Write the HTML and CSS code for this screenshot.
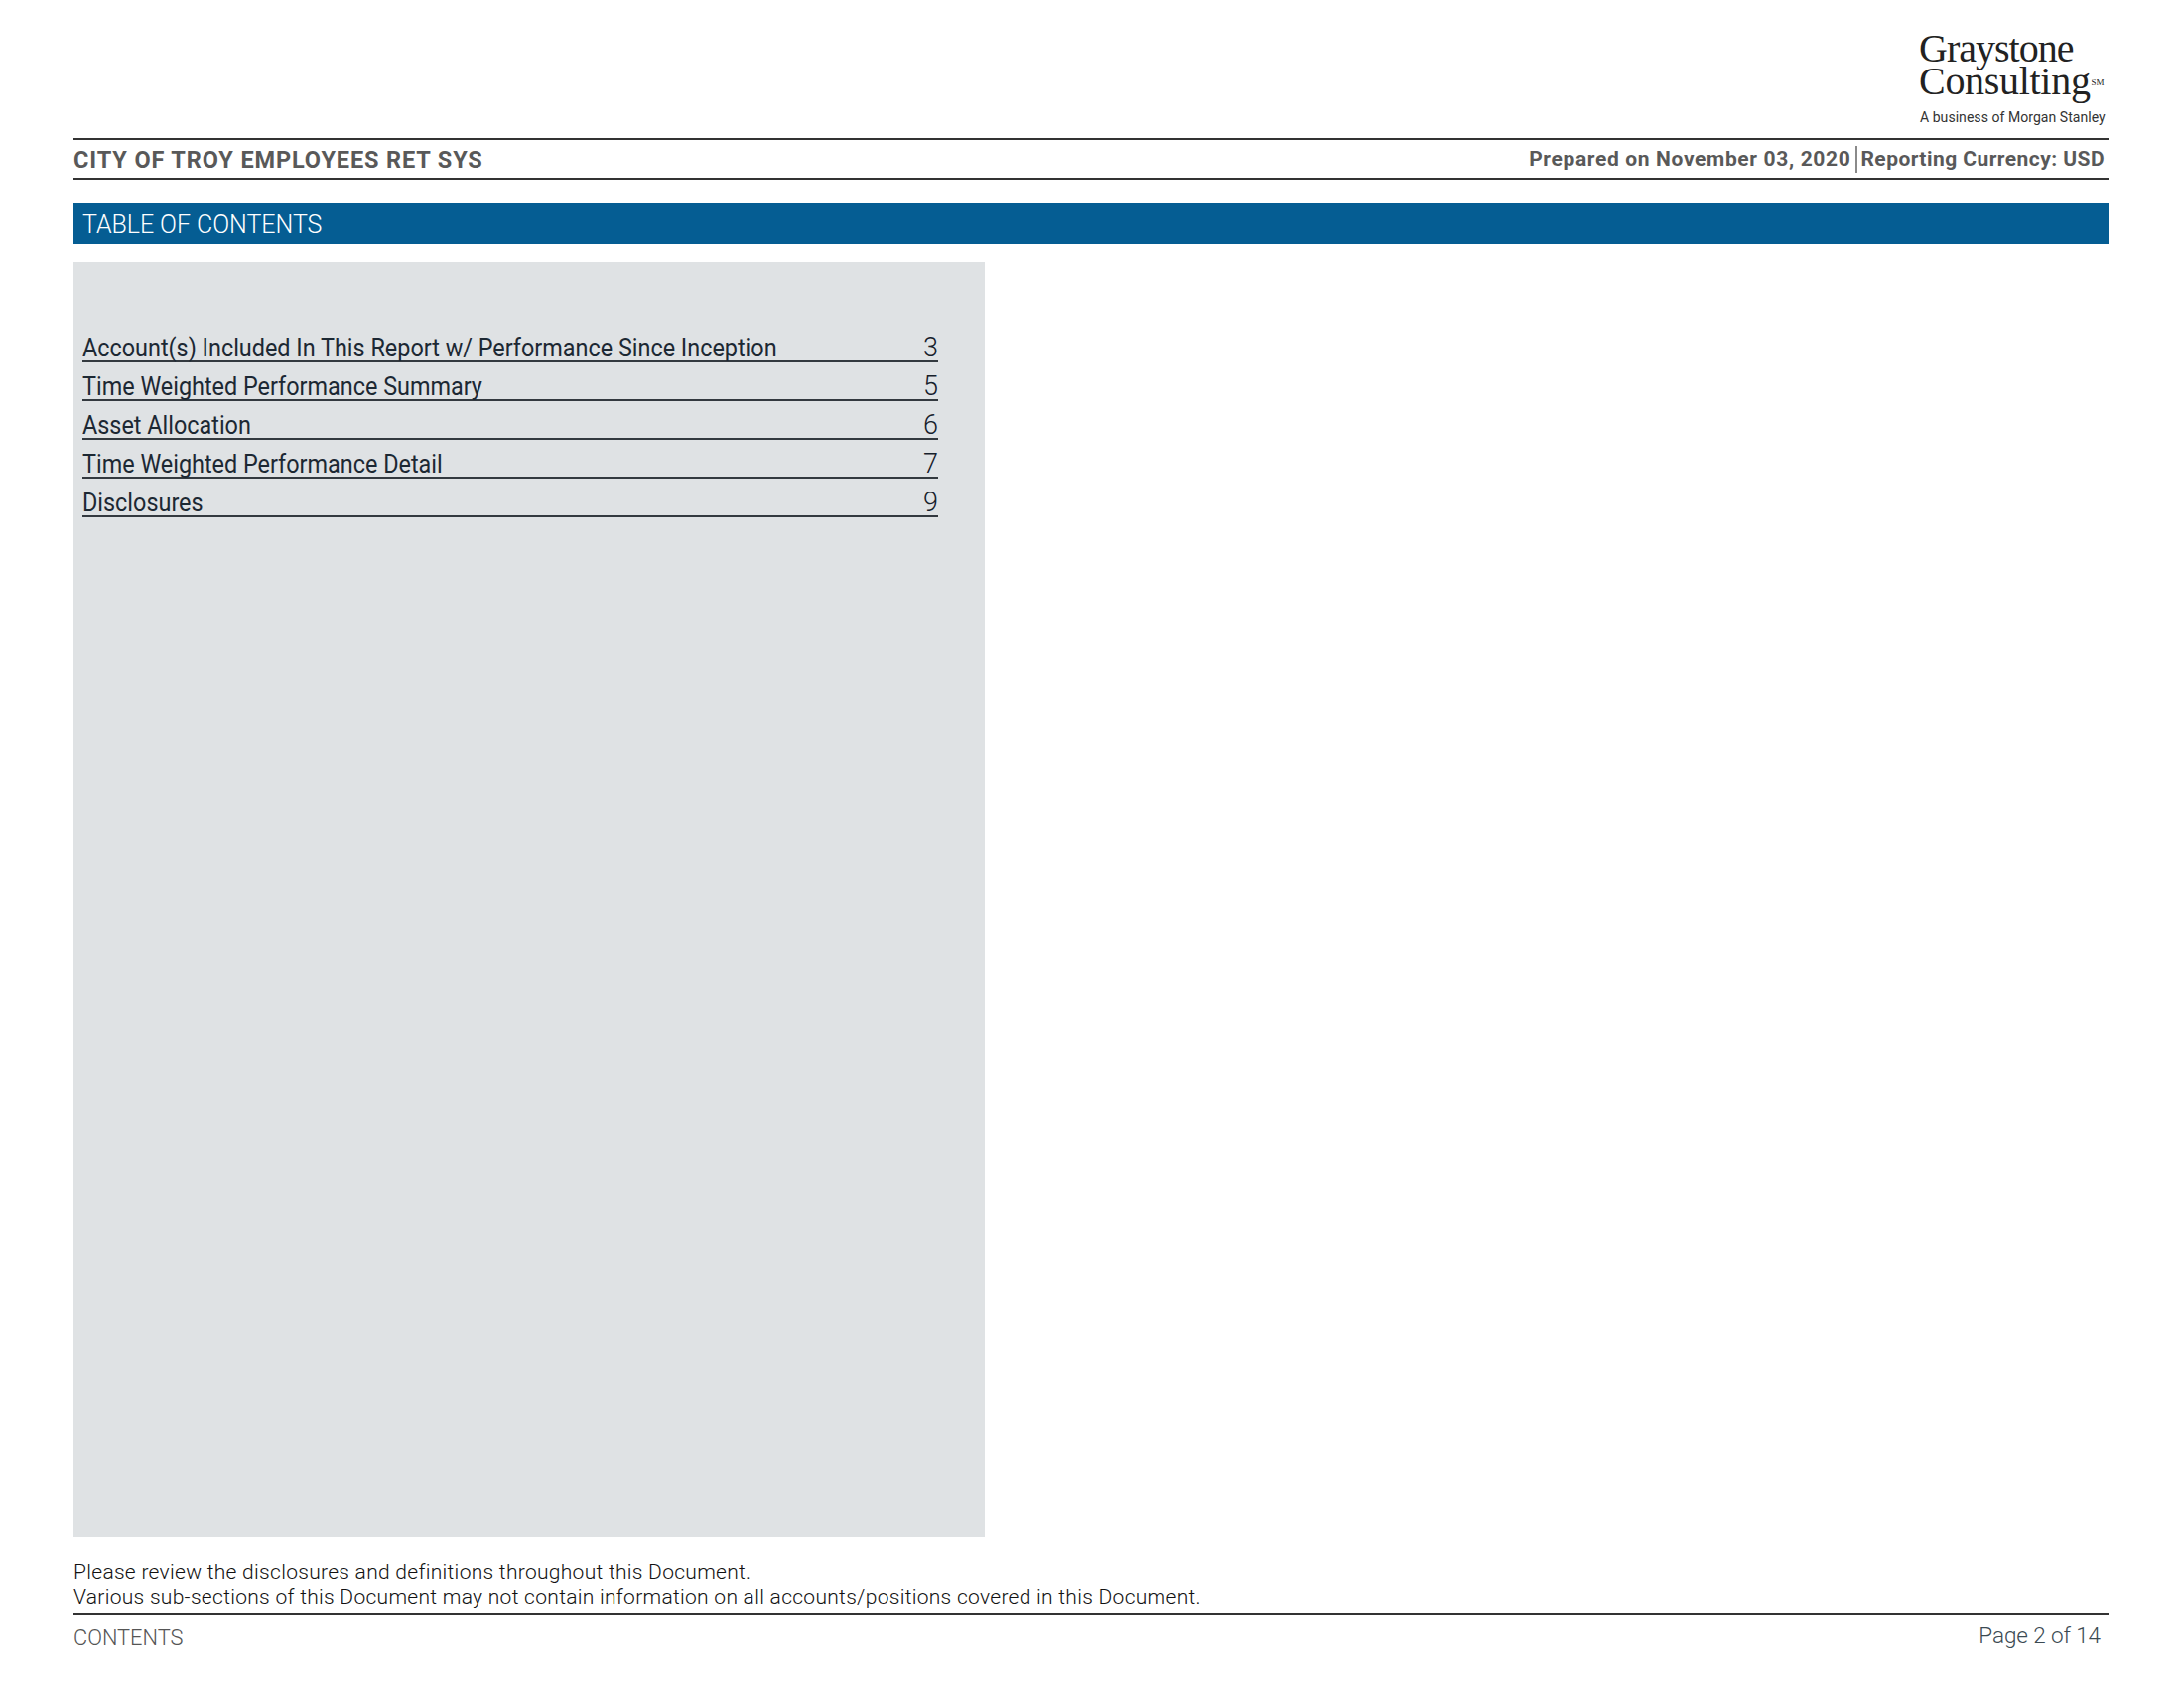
FILE: index.html
```html
<!DOCTYPE html>
<html lang="en">
<head>
<meta charset="utf-8">
<title>Table of Contents</title>
<link rel="stylesheet" href="styles.css">
</head>
<body>
<div class="page">
  <header class="logo">
    <div class="logo-name">
      <div class="logo-line">Graystone</div>
      <div class="logo-line logo-line-b">Consulting<sup class="logo-sm">SM</sup></div>
    </div>
    <div class="logo-tag">A business of Morgan Stanley</div>
  </header>
  <div class="info">
    <span class="client">CITY OF TROY EMPLOYEES RET SYS</span>
    <div class="meta">
      <span class="meta-date">Prepared on November 03, 2020</span>
      <i class="meta-sep"></i>
      <span>Reporting Currency: USD</span>
    </div>
  </div>
  <h1 class="title">TABLE OF CONTENTS</h1>
  <main class="panel">
    <div class="row"><span class="label">Account(s) Included In This Report w/ Performance Since Inception</span><span class="num">3</span></div>
    <div class="row"><span class="label">Time Weighted Performance Summary</span><span class="num">5</span></div>
    <div class="row"><span class="label">Asset Allocation</span><span class="num">6</span></div>
    <div class="row"><span class="label">Time Weighted Performance Detail</span><span class="num">7</span></div>
    <div class="row"><span class="label">Disclosures</span><span class="num">9</span></div>
  </main>
  <p class="notes">Please review the disclosures and definitions throughout this Document.<br>Various sub-sections of this Document may not contain information on all accounts/positions covered in this Document.</p>
  <footer class="foot">
    <span class="foot-left">CONTENTS</span>
    <span class="foot-right">Page 2 of 14</span>
  </footer>
</div>
</body>
</html>
```
FILE: styles.css
```css
* { box-sizing: border-box; }
html, body { margin: 0; padding: 0; background: #fff; }
body { font-family: "Roboto", "Liberation Sans", sans-serif; }
.page { width: 2050px; margin-left: 74px; display: flex; flex-direction: column; }

.logo { height: 139px; display: flex; flex-direction: column; align-items: flex-end; padding-top: 32px; }
.logo-name { width: 191px; font-family: "Liberation Serif", serif; font-size: 40px; color: #222; }
.logo-line { height: 33px; line-height: 33px; letter-spacing: -1px; white-space: nowrap; }
.logo-line-b { letter-spacing: -.3px; }
.logo-sm { font-size: 9px; letter-spacing: 0; line-height: 0; vertical-align: 9px; margin-left: 1px; }
.logo-tag { width: 190px; margin-top: 11px; font-size: 14px; line-height: 18px; letter-spacing: .05px; color: #333; white-space: nowrap; }

.info { height: 42px; border-top: 2px solid #333; border-bottom: 2px solid #333; display: flex; justify-content: space-between; align-items: center; color: #595959; font-weight: 700; }
.client { font-size: 23.5px; letter-spacing: .87px; padding-top: 2px; }
.meta { display: flex; align-items: center; font-size: 21px; padding-right: 4px; letter-spacing: .45px; padding-bottom: 1px; }
.meta-date { letter-spacing: .65px; }
.meta-sep { width: 2px; height: 27px; background: #8a8a8a; margin: 2px 3px 0 5px; }

.title { margin: 23px 0 0; height: 42px; padding-left: 9px; background: #055d93; color: #fff; font-size: 25px; line-height: 45px; font-weight: 300; letter-spacing: -.05px; }

.panel { margin-top: 18px; width: 918px; height: 1284px; padding: 62px 0 0 9px; background: #dfe2e4; }
.row { width: 862px; height: 39px; display: flex; justify-content: space-between; align-items: flex-end; border-bottom: 2px solid #33393f; font-size: 26px; line-height: 26px; color: #1c2833; }
.label { display: inline-block; white-space: nowrap; transform: scaleX(.9); transform-origin: left center; }
.num { display: inline-block; font-size: 27px; font-weight: 300; color: #16202b; }

.notes { margin: 23px 0 0; font-size: 21px; line-height: 25px; font-weight: 300; letter-spacing: .29px; color: #111; }

.foot { border-top: 2px solid #333; margin-top: 3px; display: flex; justify-content: space-between; font-weight: 300; }
.foot-left { font-size: 21.8px; line-height: 28px; padding-top: 10px; color: #555; }
.foot-right { font-size: 22.5px; line-height: 28px; padding-top: 7px; padding-right: 8px; letter-spacing: -.1px; color: #3b4a52; }
```
